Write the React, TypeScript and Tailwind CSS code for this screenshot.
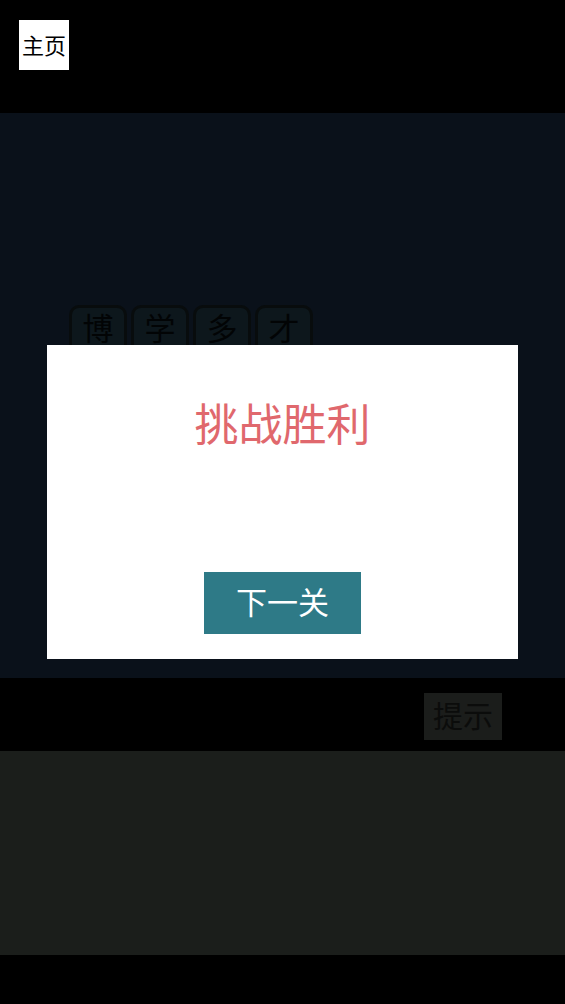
import React from "react";

const cjk = { fontFamily: '"Noto Sans CJK SC", "Noto Sans", sans-serif' };

const words = ["博", "学", "多", "才"];

function Tile({ ch }: { ch: string }) {
    return (
        <div className="w-[58px] h-[58px] rounded-[10px] border-[3px] border-[#080c0d] bg-[#0d171c] flex items-start justify-center pt-[3px] text-[31px] leading-none text-[#020405]">
            {ch}
        </div>
    );
}

export default function App() {
    return (
        <div className="w-[565px] h-[1004px] bg-black flex flex-col" style={cjk}>
            {/* header */}
            <div className="h-[113px] px-[19px] pt-[20px]">
                <button className="w-[50px] h-[50px] bg-white text-black text-[22px] leading-none flex items-center justify-center pb-[2px]">
                    主页
                </button>
            </div>

            {/* board */}
            <div className="h-[565px] bg-[#0a111a] pl-[69px] pt-[192px]">
                <div className="flex gap-[4px]">
                    {words.map((w) => (
                        <Tile key={w} ch={w} />
                    ))}
                </div>
            </div>

            {/* toolbar */}
            <div className="h-[73px] flex items-start justify-end pr-[63px] pt-[15px]">
                <button className="w-[78px] h-[47px] bg-[#1b1d1b] text-[#0b0c0b] text-[30px] leading-none flex items-center justify-center pb-[5px]">
                    提示
                </button>
            </div>

            {/* keyboard area */}
            <div className="h-[204px] bg-[#1b1e1b]" />
            <div className="flex-1 bg-black" />

            {/* result dialog */}
            <div className="fixed inset-0 flex items-center justify-center pointer-events-none">
                <div className="w-[471px] h-[314px] bg-white flex flex-col items-center pointer-events-auto">
                    <h2 className="mt-[55px] text-[44px] leading-none text-[#e0686d]">挑战胜利</h2>
                    <button className="mt-[128px] w-[157px] h-[62px] bg-[#2e7a87] text-white text-[31px] leading-none flex items-center justify-center pb-[6px]">
                        下一关
                    </button>
                </div>
            </div>
        </div>
    );
}
